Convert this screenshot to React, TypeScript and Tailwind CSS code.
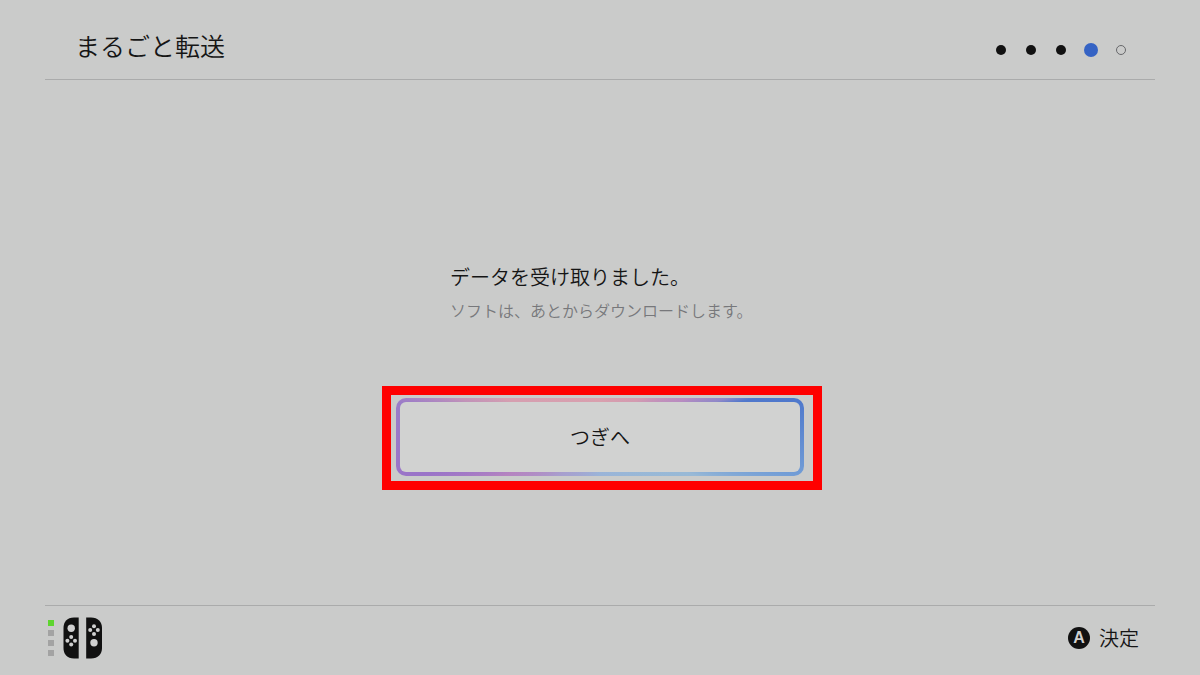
import { clsx } from "clsx"

const steps = ["done", "done", "done", "current", "todo"]

const players = [true, false, false, false]

function StepDots() {
  return (
    <ol className="flex items-center pr-[26px] pt-5">
      {steps.map((state, index) => (
        <li key={index} className="flex h-4 w-[30px] items-center justify-center last:w-4 last:ml-[7px]">
          <span
            className={clsx(
              "block rounded-full",
              state === "done" && "size-[10px] bg-[#111111]",
              state === "current" && "size-[14px] bg-[#3563c4]",
              state === "todo" && "size-[10px] border border-[#67686b]",
            )}
          />
        </li>
      ))}
    </ol>
  )
}

function Controllers() {
  return (
    <div className="flex items-center gap-[9px] pl-[3px]">
      <div className="flex flex-col gap-1">
        {players.map((active, index) => (
          <span key={index} className={clsx("block size-[6px]", active ? "bg-[#5ed52f]" : "bg-[#a3a3a3]")} />
        ))}
      </div>
      <svg width="40" height="42" viewBox="0 0 40 42" aria-hidden="true">
        <path d="M15.700 0.500V41.500H11C4 41.500 0.500 37 0.500 31V11C0.500 5 4 0.500 11 0.500Z" fill="#111111" />
        <path d="M23.200 0.500V41.500H28C35 41.500 39 37 39 31V11C39 5 35 0.500 28 0.500Z" fill="#111111" />
        <g fill="#d0d0d0">
          <circle cx="8.200" cy="11.300" r="3.700" />
          <circle cx="8.200" cy="19.900" r="2" />
          <circle cx="8.200" cy="27.500" r="2" />
          <circle cx="4.400" cy="23.700" r="2" />
          <circle cx="12" cy="23.700" r="2" />
          <circle cx="31" cy="9.300" r="2" />
          <circle cx="31" cy="16.900" r="2" />
          <circle cx="27.200" cy="13.100" r="2" />
          <circle cx="34.800" cy="13.100" r="2" />
          <circle cx="31" cy="25.800" r="3.700" />
        </g>
      </svg>
    </div>
  )
}

export default function App() {
  return (
    <div className="flex min-h-screen flex-col bg-[#cacbca] px-[45px] font-['Noto_Sans_CJK_JP',sans-serif] text-[#151515]">
      <header className="flex h-20 items-center justify-between border-b border-[#aaabab]">
        <h1 className="pl-[30px] pt-[10px] text-[25px] leading-8 font-[350]">まるごと転送</h1>
        <StepDots />
      </header>

      <main className="flex flex-1 flex-col items-center justify-center pt-[52px]">
        <div className="mb-[76px] w-[408px] pl-[54px]">
          <p className="mb-[6px] text-[20px] leading-[30px] font-[350]">データを受け取りました。</p>
          <p className="text-[16px] leading-6 font-[350] text-[#77787b]">ソフトは、あとからダウンロードします。</p>
        </div>

        <div className="relative w-[408px]">
          <div className="rounded-[10px] bg-[conic-gradient(#d9a0ae_0deg,#d39bb0_45deg,#b98cc0_66deg,#9088c8_73deg,#5078cc_76deg,#4f79cc_80deg,#729dd6_101deg,#98b9d6_112deg,#9ab4d8_180deg,#a79fce_226deg,#b584c0_248deg,#9a74c8_258deg,#9b7cc8_280deg,#c293b8_285deg,#d69fb0_292deg,#d9a0ae_360deg)] p-1">
            <button className="h-[70px] w-full rounded-md bg-[#d1d2d1] text-[20px] font-[350]">つぎへ</button>
          </div>
          <div className="pointer-events-none absolute -top-3 -right-[18px] -bottom-[14px] -left-[14px] border-[9px] border-[#ff0000]" />
        </div>
      </main>

      <footer className="flex h-[70px] items-center justify-between border-t border-[#aaabab] pb-[6px]">
        <Controllers />
        <button className="flex items-center gap-[9px] pr-4 text-[20px] leading-8 font-[350]">
          <span className="flex size-[22px] items-center justify-center rounded-full bg-[#111111] font-['Liberation_Sans',sans-serif] text-[16px] leading-none font-bold text-[#d0d0d0]">
            A
          </span>
          決定
        </button>
      </footer>
    </div>
  )
}
